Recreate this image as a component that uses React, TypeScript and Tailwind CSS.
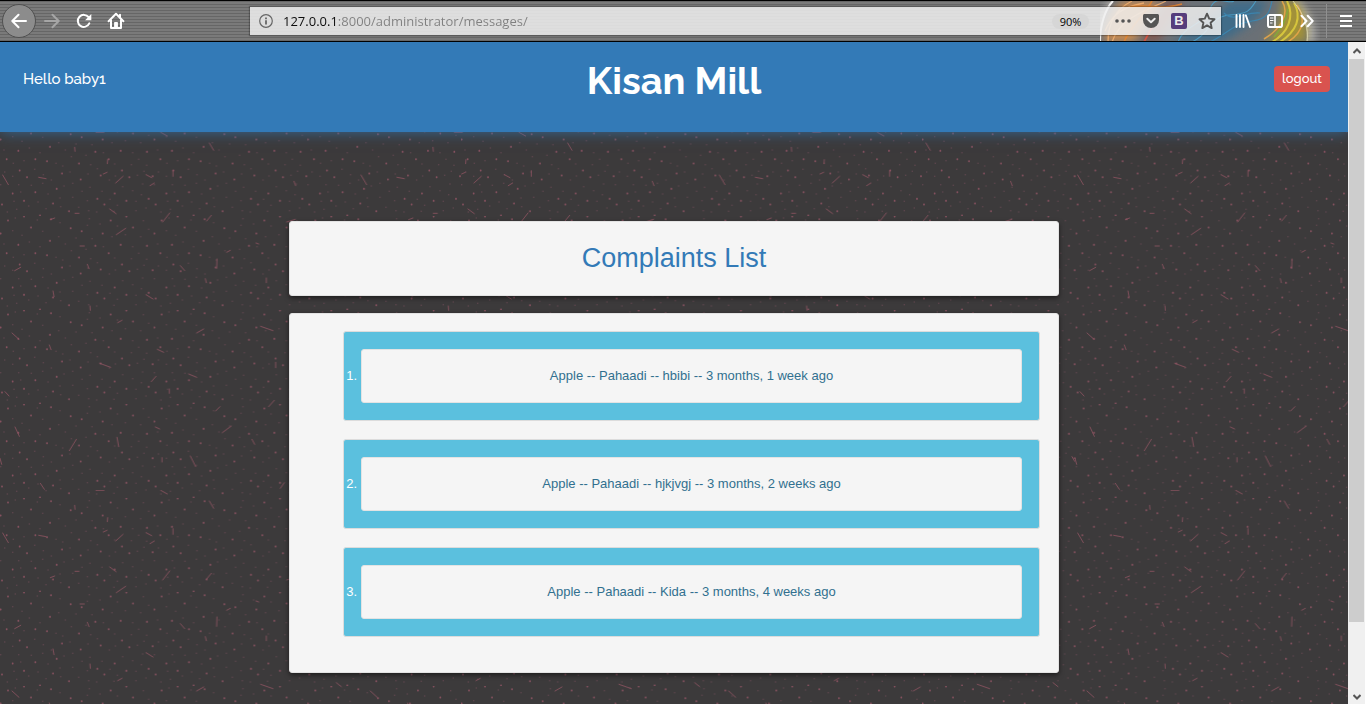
import type { ReactNode } from "react";

type Complaint = { id: number; crop: string; variety: string; author: string; age: string };

const complaints: Complaint[] = [
  { id: 1, crop: "Apple", variety: "Pahaadi", author: "hbibi", age: "3 months, 1 week ago" },
  { id: 2, crop: "Apple", variety: "Pahaadi", author: "hjkjvgj", age: "3 months, 2 weeks ago" },
  { id: 3, crop: "Apple", variety: "Pahaadi", author: "Kida", age: "3 months, 4 weeks ago" },
];

// Large specks of the wallpaper, in a 461 x 282 tile.
const specks: number[][] = [
  [24, 13], [332, 13], [93, 34], [212, 36], [399, 34], [245, 45], [2, 52], [308, 52], [150, 74], [286, 89],
  [362, 86], [441, 89], [55, 86], [20, 111], [106, 111], [326, 111], [237, 124], [141, 117], [59, 145],
  [366, 145], [186, 154], [81, 165], [388, 165], [242, 172], [302, 160], [458, 162], [170, 200], [106, 210],
  [38, 214], [344, 214], [292, 230], [446, 230], [72, 236], [379, 236], [159, 244], [313, 247], [6, 247],
  [207, 267], [120, 280], [72, 1], [379, 1], [153, 9],
];

// Fainter specks between the large ones.
const faint: number[][] = [
  [46, 6], [112, 12], [180, 20], [268, 8], [300, 24], [352, 30], [430, 14], [38, 44], [66, 58], [128, 46],
  [176, 62], [228, 66], [262, 28], [276, 68], [336, 62], [376, 56], [422, 62], [446, 40], [12, 84], [88, 78],
  [120, 92], [196, 84], [214, 104], [258, 100], [310, 92], [398, 92], [416, 112], [40, 124], [72, 116],
  [168, 124], [188, 132], [272, 128], [292, 140], [344, 126], [394, 128], [440, 130], [14, 150], [38, 163],
  [104, 142], [130, 158], [154, 174], [210, 150], [264, 156], [328, 174], [346, 162], [412, 160], [432, 148],
  [2, 188], [56, 188], [94, 190], [128, 184], [192, 192], [218, 184], [246, 208], [270, 196], [306, 208],
  [368, 194], [398, 206], [428, 186], [62, 210], [144, 216], [180, 228], [218, 226], [262, 236], [330, 232],
  [408, 238], [424, 218], [42, 238], [86, 252], [114, 240], [138, 260], [182, 254], [236, 256], [266, 266],
  [290, 270], [342, 268], [352, 250], [408, 266], [438, 258], [22, 270], [50, 262],
];

// Dashes of the wallpaper (x1, y1, x2, y2), in a 1075 x 1074 tile.
const dashes: number[][] = [
  [8, 129, 25, 158], [116, 136, 138, 140], [224, 46, 225, 58], [323, 83, 322, 95], [310, 126, 321, 121],
  [347, 153, 369, 133], [288, 1, 312, 1], [482, 1, 502, 12], [628, 33, 641, 55], [519, 116, 519, 133],
  [438, 128, 455, 137], [450, 161, 463, 153], [329, 231, 348, 245], [225, 244, 237, 244], [151, 263, 164, 258],
  [349, 308, 377, 289], [488, 270, 509, 243], [620, 267, 634, 250], [240, 342, 253, 342], [44, 416, 62, 406],
  [262, 397, 267, 410], [159, 477, 162, 494], [270, 522, 271, 535], [438, 488, 459, 501], [541, 401, 554, 416],
  [651, 381, 650, 409], [616, 440, 619, 452], [799, 438, 799, 452], [680, 361, 691, 355], [768, 333, 776, 336],
  [353, 572, 366, 565], [36, 603, 57, 622], [148, 639, 153, 653], [590, 603, 611, 591], [782, 583, 819, 596],
  [472, 652, 491, 661], [299, 694, 332, 706], [827, 691, 827, 707], [566, 726, 590, 736], [454, 749, 468, 733],
  [508, 771, 508, 784], [15, 779, 27, 792], [806, 824, 823, 805], [647, 837, 660, 824], [667, 902, 694, 882],
  [466, 885, 479, 891], [45, 885, 58, 913], [208, 956, 229, 922], [351, 916, 356, 944], [571, 972, 587, 1004],
  [756, 922, 764, 937], [0, 979, 5, 997], [121, 1054, 133, 1072], [486, 977, 486, 990], [841, 1069, 853, 1052],
  [882, 148, 887, 161], [860, 270, 886, 262], [1009, 578, 1024, 590], [1066, 974, 1074, 988],
];

function Wallpaper() {
  return (
    <svg className="absolute inset-0 h-full w-full" aria-hidden="true">
      <defs>
        <pattern id="specks" width="461" height="282" patternUnits="userSpaceOnUse" patternTransform="translate(0 178) scale(0.33333)">
          {faint.map(([x, y], i) => (
            <rect key={i} x={x - 2} y={y - 2} width="4" height="4" fill="#93566a" opacity="0.36" />
          ))}
          {specks.map(([x, y], i) => (
            <rect key={i} x={x - 2.5} y={y - 2.5} width="5" height="6" rx="2" fill="#8f5363" opacity="0.9" />
          ))}
        </pattern>
        <pattern id="dashes" width="1075" height="1074" patternUnits="userSpaceOnUse" patternTransform="scale(0.33333)">
          {dashes.map(([x1, y1, x2, y2], i) => (
            <line key={i} x1={x1} y1={y1} x2={x2} y2={y2} stroke="#905360" strokeWidth="2.8" strokeLinecap="round" opacity="0.85" />
          ))}
        </pattern>
      </defs>
      <rect width="100%" height="100%" fill="url(#specks)" />
      <rect width="100%" height="100%" fill="url(#dashes)" />
    </svg>
  );
}

function ThemeArt() {
  return (
    <svg className="absolute top-0 right-[46px] h-[41px] w-[220px]" viewBox="0 0 220 41" aria-hidden="true">
      <defs>
        <filter id="soft" x="-20%" y="-20%" width="140%" height="140%">
          <feGaussianBlur stdDeviation="4" />
        </filter>
        <filter id="glow" x="-20%" y="-20%" width="140%" height="140%">
          <feGaussianBlur stdDeviation="0.7" />
        </filter>
      </defs>
      <path d="M-4 41C-6 25 2 8 10 0H198C212 14 216 28 214 41Z" fill="#e0e0e0" opacity="0.6" filter="url(#soft)" />
      <path d="M0 41C0 25 6 8 14 0H192C204 14 208 28 206 41Z" fill="#6b6f76" filter="url(#glow)" />
      <g filter="url(#soft)">
        <path d="M4 41C4 20 14 4 24 0H60L34 41Z" fill="#c98a50" />
        <path d="M40 41L66 0H84L58 41Z" fill="#80584f" />
        <path d="M74 41C92 24 110 20 128 0H168C160 20 140 30 122 41Z" fill="#3f6c88" />
        <path d="M164 41C178 30 184 12 180 0H196C208 14 208 30 206 41Z" fill="#a39238" />
      </g>
      <g fill="none" filter="url(#glow)" opacity="0.85">
        <path d="M0 41C0 25 5 8 13 0" stroke="#fff" strokeWidth="2" />
        <path d="M8 41C8 22 16 8 32 0M12 41C20 18 40 12 66 0M5 30C12 14 22 6 44 2" stroke="#f3b070" strokeWidth="1.3" />
        <path d="M24 41C30 26 44 14 52 0M30 6C50 2 58 10 82 3" stroke="#e8862f" strokeWidth="1.5" />
        <path d="M44 41C48 34 52 24 60 16" stroke="#e2533f" strokeWidth="1.8" />
        <path d="M78 41C84 24 104 24 110 8S128 4 134 0M92 41C112 32 108 16 130 14S150 8 156 0" stroke="#4ba2cc" strokeWidth="1.1" />
        <path d="M110 41C126 34 134 22 152 20S170 8 172 0M124 12C134 22 146 10 160 12" stroke="#3a88b4" strokeWidth="1.2" />
        <path d="M172 41C188 32 195 16 187 0M180 41C197 30 202 16 194 2" stroke="#e0cf3e" strokeWidth="2" />
        <path d="M164 38C181 28 190 12 182 0M188 41C205 30 205 16 197 4" stroke="#eda84a" strokeWidth="1.5" />
        <path d="M174 36C182 26 186 20 188 8" stroke="#7fae3c" strokeWidth="1.5" />
        <path d="M193 0C205 14 209 28 207 41" stroke="#dcd8b0" strokeWidth="1" />
      </g>
    </svg>
  );
}

function ToolButton({ label, children }: { label: string; children: ReactNode }) {
  return (
    <button type="button" aria-label={label} className="flex h-8 w-8 shrink-0 items-center justify-center text-white">
      {children}
    </button>
  );
}

function AddressButton({ label, children }: { label: string; children: ReactNode }) {
  return (
    <button type="button" aria-label={label} className="flex h-7 w-7 shrink-0 items-center justify-center text-[#555]">
      {children}
    </button>
  );
}

function Toolbar() {
  return (
    <div className="relative flex h-[42px] shrink-0 items-center overflow-hidden border-t border-b border-black bg-[repeating-linear-gradient(180deg,#666666_0_1px,#7a7a7a_1px_3px)] pr-1 pl-[2px]">
      <ThemeArt />
      <div className="relative flex flex-1 items-center">
        <button
          type="button"
          aria-label="Back"
          className="flex h-[34px] w-[34px] shrink-0 items-center justify-center rounded-full border border-[#505050] bg-[#8c8c8c] text-white"
        >
          <svg className="h-4 w-4" viewBox="0 0 16 16" fill="none" stroke="currentColor" strokeWidth="2" strokeLinecap="round" strokeLinejoin="round">
            <path d="M15 8H1.5M7.5 1.8L1.3 8l6.2 6.2" />
          </svg>
        </button>
        <button type="button" aria-label="Forward" disabled className="flex h-8 w-8 shrink-0 items-center justify-center text-[#a6a6a6]">
          <svg className="h-4 w-4" viewBox="0 0 16 16" fill="none" stroke="currentColor" strokeWidth="2" strokeLinecap="round" strokeLinejoin="round">
            <path d="M1 8h13.5M8.5 1.8L14.7 8l-6.2 6.2" />
          </svg>
        </button>
        <ToolButton label="Reload">
          <svg className="h-4 w-4" viewBox="0 0 16 16" fill="none" stroke="currentColor" strokeWidth="2">
            <path d="M13.3 10.4A6 6 0 1 1 12.6 4.2" strokeLinecap="round" />
            <path d="M15.3 1v6.2H9.1z" fill="currentColor" stroke="none" />
          </svg>
        </ToolButton>
        <ToolButton label="Home">
          <svg className="h-[18px] w-[18px]" viewBox="0 0 18 18" fill="none" stroke="currentColor" strokeWidth="2" strokeLinejoin="round" strokeLinecap="round">
            <path d="M1.6 9.2L9 1.8l7.4 7.4" />
            <path d="M4 8.2V16h10V8.2M13 2.8v2.6" />
            <path d="M7.8 15.5v-4.8h2.4v4.8" fill="currentColor" strokeWidth="1.4" />
          </svg>
        </ToolButton>

        <div className="ml-[118px] flex h-7 min-w-0 flex-1 items-center bg-[#f0f0f0]/85 shadow-[0_0_1px_1px_rgba(0,0,0,0.25)]">
          <button type="button" aria-label="Site information" className="flex h-7 w-8 shrink-0 items-center justify-center text-[#666]">
            <svg className="h-[14px] w-[14px]" viewBox="0 0 14 14" fill="none" stroke="currentColor">
              <circle cx="7" cy="7" r="6.3" strokeWidth="1.2" />
              <path d="M7 6.2v4.3M7 3.4v1.8" strokeWidth="1.8" />
            </svg>
          </button>
          <input
            type="text"
            aria-label="Address"
            defaultValue="127.0.0.1:8000/administrator/messages/"
            className="h-7 min-w-0 flex-1 bg-[linear-gradient(90deg,#0c0c0c_56px,#808080_56px)] bg-clip-text pl-px font-['Open_Sans',sans-serif] text-[13px] text-transparent outline-none"
          />
          <button
            type="button"
            aria-label="Zoom level"
            className="mr-5 h-[15px] w-[37px] rounded-full bg-[#d6d6d6] text-center font-['Open_Sans',sans-serif] text-[11px] leading-[15px] text-black"
          >
            90%
          </button>
          <AddressButton label="Page actions">
            <svg className="h-4 w-4" viewBox="0 0 16 16" fill="currentColor">
              <circle cx="2" cy="8" r="1.8" />
              <circle cx="8" cy="8" r="1.8" />
              <circle cx="14" cy="8" r="1.8" />
            </svg>
          </AddressButton>
          <AddressButton label="Save to Pocket">
            <svg className="h-4 w-4" viewBox="0 0 16 16">
              <path d="M1.6 1h12.8c.9 0 1.6.7 1.6 1.6V7a8 8 0 0 1-16 0V2.6C0 1.7.7 1 1.6 1z" fill="currentColor" />
              <path d="M4.3 5.8L8 9.3l3.7-3.500" fill="none" stroke="#ececec" strokeWidth="2" strokeLinecap="round" strokeLinejoin="round" />
            </svg>
          </AddressButton>
          <button type="button" className="flex h-7 w-7 shrink-0 items-center justify-center">
            <span className="h-4 w-4 rounded-xs bg-[#563d7c] text-center font-['Liberation_Sans',sans-serif] text-[13px] leading-4 font-bold text-[#ececec]">
              B
            </span>
          </button>
          <AddressButton label="Bookmark this page">
            <svg className="h-[18px] w-[18px]" viewBox="0 0 18 18" fill="none" stroke="currentColor" strokeWidth="1.9" strokeLinejoin="round">
              <path d="M9 1.7l2.2 4.9 5.3.6-3.9 3.6 1.1 5.3L9 13.4l-4.7 2.7 1.1-5.3L1.5 7.2l5.3-.6z" />
            </svg>
          </AddressButton>
        </div>

        <div className="ml-1.5 flex items-center">
          <ToolButton label="Library">
            <svg className="h-4 w-4" viewBox="0 0 16 16" fill="none" stroke="currentColor" strokeWidth="1.9" strokeLinecap="round">
              <path d="M1.5 2v12M5 2v12M8.5 2v12M10.9 2.5L15 14" />
            </svg>
          </ToolButton>
          <ToolButton label="Sidebars">
            <svg className="h-4 w-4" viewBox="0 0 16 16" fill="none" stroke="currentColor">
              <rect x="1" y="2" width="14" height="12" rx="1.8" strokeWidth="2" />
              <path d="M8 2v12" strokeWidth="1.6" />
              <path d="M3 5h3.5M3 7.5h3.5M3 10h2.5" strokeWidth="1.2" />
            </svg>
          </ToolButton>
          <ToolButton label="More tools">
            <svg className="h-[14px] w-[14px]" viewBox="0 0 14 14" fill="none" stroke="currentColor" strokeWidth="2" strokeLinecap="round" strokeLinejoin="round">
              <path d="M1.5 1.8L6.5 7l-5 5.2M7.7 1.8l5 5.2-5 5.2" />
            </svg>
          </ToolButton>
          <div className="mx-[3px] h-[34px] w-px bg-[#8f8f8f]" />
          <ToolButton label="Menu">
            <svg className="h-3 w-3" viewBox="0 0 12 12" fill="none" stroke="currentColor" strokeWidth="2">
              <path d="M0 1h12M0 6h12M0 11h12" />
            </svg>
          </ToolButton>
        </div>
      </div>
    </div>
  );
}

function ScrollBar() {
  return (
    <div className="flex w-[18px] shrink-0 flex-col border-r border-white bg-[#f0f0f0] px-px" aria-hidden="true">
      <div className="flex h-[17px] items-center justify-center text-[#555]">
        <svg className="h-2 w-2" viewBox="0 0 8 8" fill="none" stroke="currentColor" strokeWidth="2">
          <path d="M0.500 6L4 2.500 7.500 6" />
        </svg>
      </div>
      <div className="min-h-0 flex-1">
        <div className="h-[89.3%] bg-[#cdcdcd]" />
      </div>
      <div className="flex h-[15px] items-center justify-center text-[#555]">
        <svg className="h-2 w-2" viewBox="0 0 8 8" fill="none" stroke="currentColor" strokeWidth="2">
          <path d="M0.500 2L4 5.500 7.500 2" />
        </svg>
      </div>
    </div>
  );
}

function Header() {
  return (
    <header className="relative z-10 grid h-[90px] shrink-0 grid-cols-3 items-start bg-[#337ab7] px-[18px] font-[Raleway,Lato,sans-serif] text-white shadow-[0_0_14px_rgba(51,122,183,0.75)]">
      <p className="pt-[26px] pl-[5px] text-[15px] leading-[22px] font-medium">Hello baby1</p>
      <h1 className="pt-4 text-center text-[38px] leading-[46px] font-bold">Kisan Mill</h1>
      <div className="flex justify-end pt-6">
        <button type="button" className="h-[26px] w-14 rounded bg-[#d9534f] text-center text-[13px] leading-[26px] font-medium">
          logout
        </button>
      </div>
    </header>
  );
}

const card = "rounded-[3px] border border-[#e3e3e3] bg-[#f5f5f5]";

export default function App() {
  return (
    <div className="flex h-screen flex-col overflow-hidden bg-[#3c3a3b]">
      <Toolbar />
      <div className="flex min-h-0 flex-1">
        <div className="flex min-w-0 flex-1 flex-col overflow-hidden">
          <Header />
          <main className="relative flex-1 pt-[89px] font-['Liberation_Sans',sans-serif]">
            <Wallpaper />
            <div className="relative mx-auto flex max-w-[770px] flex-col gap-[17px]">
              <section className={`${card} py-[18px] shadow-[0_2px_5px_rgba(0,0,0,0.5)]`}>
                <h2 className="text-center text-[27px] leading-[37px] text-[#337ab7]">Complaints List</h2>
              </section>
              <section className={`${card} pt-[17px] pr-[18px] pb-[35px] pl-[53px] shadow-[0_2px_5px_rgba(0,0,0,0.5)]`}>
                <ol className="flex flex-col gap-[18px] text-[13px] leading-5">
                  {complaints.map((c) => (
                    <li key={c.id} className="flex items-center rounded-[3px] border border-[#dcdcdc] bg-[#5bc0de] py-[17px] pr-[17px]">
                      <span className="w-[17px] shrink-0 pr-1 text-right text-white">{c.id}.</span>
                      <a href={`#message-${c.id}`} className={`${card} block flex-1 py-4 text-center text-[#31708f]`}>
                        {`${c.crop} -- ${c.variety} -- ${c.author} -- ${c.age}`}
                      </a>
                    </li>
                  ))}
                </ol>
              </section>
            </div>
          </main>
        </div>
        <ScrollBar />
      </div>
    </div>
  );
}
